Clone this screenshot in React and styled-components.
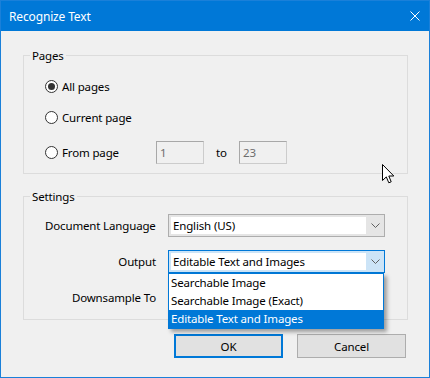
import React from 'react'
import styled, { createGlobalStyle } from 'styled-components'

const GlobalStyle = createGlobalStyle`
  html, body {
    margin: 0;
    padding: 0;
    background: #f0f0f0;
  }
  * {
    box-sizing: border-box;
  }
`

const pageRange = { from: '1', to: '23' };
const outputOptions = ['Searchable Image', 'Searchable Image (Exact)', 'Editable Text and Images'];

function Chevron() {
  return (
    <svg width="9" height="6" viewBox="0 0 9 6">
      <polyline points="0.5,0.5 4.5,4.5 8.5,0.5" fill="none" stroke="#606060" strokeWidth="1" />
    </svg>
  )
}

export default function App() {
  return (
    <>
      <GlobalStyle />
      <Window>
        <TitleBar>
          <TitleText>Recognize Text</TitleText>
          <CloseBtn>
            <svg width="10" height="10" viewBox="0 0 10 10">
              <path d="M0.5 0.5 L9.5 9.5 M9.5 0.5 L0.5 9.5" stroke="#fff" strokeWidth="1" />
            </svg>
          </CloseBtn>
        </TitleBar>

        <Body>
          <GroupBox>
            <Legend>Pages</Legend>
            <PagesInner>
              <RadioRow>
                <Radio $checked />
                <RadioLabel>All pages</RadioLabel>
              </RadioRow>
              <RadioRow>
                <Radio />
                <RadioLabel>Current page</RadioLabel>
              </RadioRow>
              <RadioRow $spaced>
                <RangeLabel>
                  <Radio />
                  <RadioLabel>From page</RadioLabel>
                </RangeLabel>
                <PageInput>{pageRange.from}</PageInput>
                <ToText>to</ToText>
                <PageInput>{pageRange.to}</PageInput>
              </RadioRow>
            </PagesInner>
          </GroupBox>

          <GroupBox $top={14}>
            <Legend>Settings</Legend>
            <SettingsGrid>
              <FieldLabel $left>Document Language</FieldLabel>
              <Select>
                <SelectText>English (US)</SelectText>
                <SelectArrow><Chevron /></SelectArrow>
              </Select>

              <FieldLabel>Output</FieldLabel>
              <SelectWrap>
                <Select $focused>
                  <SelectText>Editable Text and Images</SelectText>
                  <SelectArrow><Chevron /></SelectArrow>
                </Select>
                <DropList>
                  {outputOptions.map((opt, i) => (
                    <DropItem key={opt} $active={i === outputOptions.length - 1}>{opt}</DropItem>
                  ))}
                </DropList>
              </SelectWrap>

              <FieldLabel>Downsample To</FieldLabel>
              <div />
            </SettingsGrid>
          </GroupBox>

          <ButtonRow>
            <Button $default>OK</Button>
            <Button>Cancel</Button>
          </ButtonRow>
        </Body>

        <Cursor>
          <svg width="13" height="20" viewBox="0 0 13 20">
            <path d="M0.5 0.5 L0.5 16.5 L4.3 12.9 L6.8 18.8 L9.2 17.8 L6.8 12 L11.8 12 Z" fill="#fff" stroke="#000" strokeWidth="1" strokeLinejoin="miter" />
          </svg>
        </Cursor>
      </Window>
    </>
  )
}

const Window = styled.div`
  position: relative;
  width: 430px;
  height: 378px;
  border: 1px solid #1a80d9;
  background: #f0f0f0;
  font-family: "Noto Sans", "Open Sans", sans-serif;
  font-size: 11.5px;
  letter-spacing: -0.15px;
  color: #000;
  overflow: hidden;
`

const TitleBar = styled.div`
  height: 30px;
  background: #0078d7;
  display: flex;
  align-items: center;
  justify-content: space-between;
  padding: 0 9px 0 8px;
`

const TitleText = styled.div`
  color: #fff;
  font-size: 12px;
`

const CloseBtn = styled.div`
  display: flex;
  align-items: center;
`

const Body = styled.div`
  padding: 16px 21px 0 22px;
  display: flex;
  flex-direction: column;
`

const GroupBox = styled.fieldset`
  margin: ${p => p.$top || 0}px 0 0 0;
  padding: 0;
  border: 1px solid #dcdcdc;
  min-width: 0;
`

const Legend = styled.legend`
  margin-left: 6px;
  padding: 0 2px;
  line-height: 17px;
`

const PagesInner = styled.div`
  padding: 7px 0 5px 21px;
  display: flex;
  flex-direction: column;
`

const RadioRow = styled.div`
  height: 31px;
  margin-top: ${p => (p.$spaced ? 4 : 0)}px;
  display: flex;
  align-items: center;
`

const RangeLabel = styled.div`
  width: 111px;
  display: flex;
  align-items: center;
`

const Radio = styled.span`
  position: relative;
  width: 13px;
  height: 13px;
  border: 1px solid #333;
  border-radius: 50%;
  background: #fff;
  flex-shrink: 0;

  &::after {
    content: '';
    display: ${p => (p.$checked ? 'block' : 'none')};
    position: absolute;
    left: 2px;
    top: 2px;
    width: 7px;
    height: 7px;
    border-radius: 50%;
    background: #333;
  }
`

const RadioLabel = styled.span`
  margin-left: 4px;
  white-space: nowrap;
`

const PageInput = styled.div`
  width: 48px;
  height: 23px;
  border: 1px solid #cccccc;
  border-top-color: #a8a8a8;
  border-left-color: #a8a8a8;
  background: #f0f0f0;
  color: #6d6d6d;
  padding: 2px 0 0 3px;
  line-height: 17px;
`

const ToText = styled.span`
  width: 35px;
  padding-left: 12px;
`

const SettingsGrid = styled.div`
  padding: 9px 0 10px 0;
  display: grid;
  grid-template-columns: 132px 217px;
  grid-auto-rows: 23px;
  column-gap: 12px;
  row-gap: 13px;
  align-items: center;
`

const FieldLabel = styled.div`
  text-align: ${p => (p.$left ? 'left' : 'right')};
  padding-left: ${p => (p.$left ? 21 : 0)}px;
  white-space: nowrap;
`

const SelectWrap = styled.div`
  position: relative;
  height: 23px;
`

const Select = styled.div`
  height: 23px;
  border: 1px solid ${p => (p.$focused ? '#0078d7' : '#adadad')};
  background: ${p => (p.$focused ? '#cce4f7' : '#e5e5e5')};
  display: flex;
  padding: 2px 0 2px 2px;
`

const SelectText = styled.div`
  flex: 1;
  background: #fff;
  padding-left: 2px;
  line-height: 17px;
  white-space: nowrap;
`

const SelectArrow = styled.div`
  width: 18px;
  display: flex;
  align-items: center;
  justify-content: center;
`

const DropList = styled.div`
  position: absolute;
  top: 100%;
  left: 0;
  width: 216px;
  background: #fff;
  border: 1px solid #0078d7;
  box-shadow: 3px 3px 4px rgba(0, 0, 0, 0.35);
  z-index: 2;
`

const DropItem = styled.div`
  height: 18px;
  line-height: 18px;
  padding-left: 2px;
  white-space: nowrap;
  background: ${p => (p.$active ? '#0078d7' : '#fff')};
  color: ${p => (p.$active ? '#fff' : '#000')};
`

const ButtonRow = styled.div`
  margin: 14px 2px 0 0;
  display: flex;
  justify-content: flex-end;
  gap: 14px;
`

const Button = styled.div`
  width: 109px;
  height: 24px;
  display: flex;
  align-items: center;
  justify-content: center;
  background: #e1e1e1;
  border: ${p => (p.$default ? '2px solid #0078d7' : '1px solid #adadad')};
`

const Cursor = styled.div`
  position: absolute;
  left: 381px;
  top: 163px;
  line-height: 0;
  pointer-events: none;
`
